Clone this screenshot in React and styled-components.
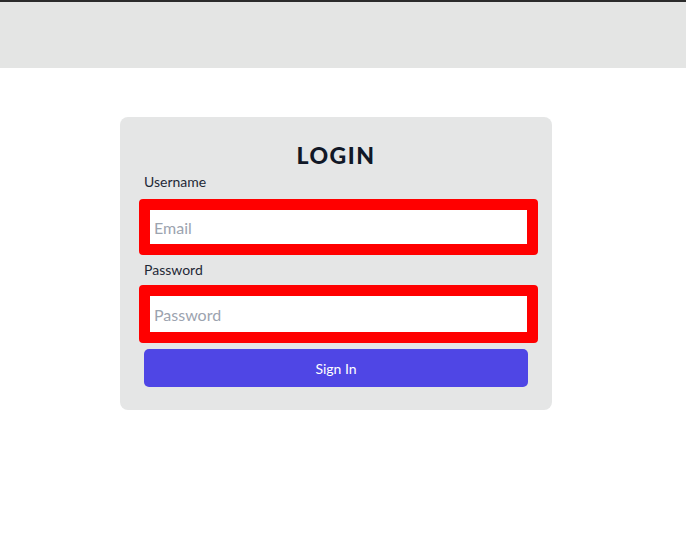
import React from "react";
import styled, { createGlobalStyle } from "styled-components";

const GlobalStyle = createGlobalStyle`
  * {
    box-sizing: border-box;
  }
  body {
    margin: 0;
    background: #ffffff;
    font-family: "Lato", "Open Sans", sans-serif;
    color: #111827;
  }
`;

const Header = styled.header`
  height: 68px;
  background: #e4e5e4;
  border-top: 2px solid #2b2b2b;
`;

const Main = styled.main`
  display: flex;
  justify-content: center;
  padding: 49px 14px 0 0;
`;

const Card = styled.form`
  width: 432px;
  display: flex;
  flex-direction: column;
  align-items: flex-start;
  padding: 24px 24px 23px;
  background: #e5e6e6;
  border-radius: 8px;
`;

const Title = styled.h2`
  align-self: stretch;
  margin: 0 0 3px;
  text-align: center;
  font-size: 23px;
  line-height: 28px;
  font-weight: 900;
  letter-spacing: 1.5px;
  color: #111827;
`;

const Label = styled.label`
  display: block;
  font-size: 14px;
  line-height: 20px;
  color: #1f2937;
  margin-top: ${(p) => p.$top || 0}px;
`;

const Input = styled.input`
  width: 399px;
  height: ${(p) => p.$height}px;
  margin: ${(p) => p.$top}px 0 0 -5px;
  padding: 0 4px;
  border: 11px solid #ff0000;
  border-radius: 4px;
  background: #ffffff;
  font-family: inherit;
  font-size: 16px;
  color: #111827;
  outline: none;
  &::placeholder {
    color: #9ca3af;
  }
`;

const Button = styled.button`
  width: 384px;
  height: 38px;
  margin-top: 6px;
  border: none;
  border-radius: 5px;
  background: #4f46e5;
  color: #ffffff;
  font-family: inherit;
  font-size: 14px;
  cursor: pointer;
`;

export default function App() {
  return (
    <>
      <GlobalStyle />
      <Header />
      <Main>
        <Card onSubmit={(e) => e.preventDefault()}>
          <Title>LOGIN</Title>
          <Label htmlFor="email">Username</Label>
          <Input
            id="email"
            type="email"
            placeholder="Email"
            $top={7}
            $height={56}
          />
          <Label htmlFor="password" $top={5}>
            Password
          </Label>
          <Input
            id="password"
            type="password"
            placeholder="Password"
            $top={5}
            $height={58}
          />
          <Button type="submit">Sign In</Button>
        </Card>
      </Main>
    </>
  );
}
